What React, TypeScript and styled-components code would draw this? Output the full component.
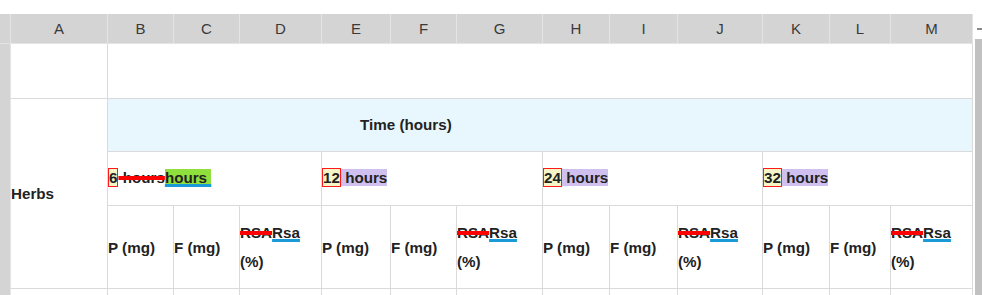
import React from 'react';
import styled, { createGlobalStyle } from 'styled-components';

const GlobalStyle = createGlobalStyle`
  html, body { margin: 0; padding: 0; background: #fff; overflow: hidden; }
  body { font-family: "Liberation Sans", Arial, sans-serif; }
  * { box-sizing: border-box; }
`;

const Viewport = styled.div`
  width: 982px;
  height: 295px;
  overflow: hidden;
  display: flex;
  background: #fff;
`;

const SheetArea = styled.div`
  width: 973px;
  padding-top: 14px;
`;

const Grid = styled.div`
  display: grid;
  grid-template-columns: 11px 97px 66px 66px 82px 69px 66px 86px 67px 68px 85px 67px 61px 82px;
  grid-template-rows: 30px 55px 53px 54px 83px 30px;
`;

const Corner = styled.div`
  background: #d4d4d4;
  border-right: 1px solid #e4e4e4;
  border-bottom: 1px solid #e4e4e4;
`;

const ColHeader = styled.div`
  background: #d4d4d4;
  border-right: 1px solid #e4e4e4;
  border-bottom: 1px solid #e4e4e4;
  display: flex;
  align-items: center;
  justify-content: center;
  font-size: 15px;
  color: #3a3a3a;
`;

const RowHeader = styled.div<{ $row: number }>`
  grid-column: 1;
  grid-row: ${(p) => p.$row};
  background: #d4d4d4;
  border-right: 1px solid #e4e4e4;
`;

const Cell = styled.div<{ $col: string; $row: string; $bg?: string; $pad?: number; $lift?: number }>`
  grid-column: ${(p) => p.$col};
  grid-row: ${(p) => p.$row};
  background: ${(p) => p.$bg || '#fff'};
  border-right: 1px solid #dadada;
  border-bottom: 1px solid #dadada;
  display: flex;
  align-items: center;
  padding-left: ${(p) => p.$pad || 0}px;
  padding-bottom: ${(p) => p.$lift || 0}px;
  font-size: 15.2px;
  font-weight: bold;
  color: #222;
  line-height: 29px;
  overflow: hidden;
`;

const CellText = styled.div`
  width: 100%;
`;

const NumBox = styled.span`
  background: #f5f5c8;
  border: 1px solid #ff1a1a;
`;

const Deleted = styled.span`
  text-decoration: line-through;
  text-decoration-color: #ff0000;
  text-decoration-thickness: 3.5px;
`;

const Inserted = styled.span<{ $bg?: string }>`
  background: ${(p) => p.$bg || 'transparent'};
  text-decoration: underline;
  text-decoration-color: #1a9bd7;
  text-decoration-thickness: 3px;
  text-underline-offset: 1px;
  white-space: pre;
`;

const Tagged = styled.span`
  background: #cfc0f0;
  white-space: pre;
`;

const Scrollbar = styled.div`
  width: 9px;
  display: flex;
  flex-direction: column;
  align-items: flex-end;
`;

const ScrollArrow = styled.div`
  margin-top: 28px;
  width: 5px;
  height: 2px;
  background: #8a8a8a;
`;

const ScrollThumb = styled.div`
  margin-top: 9px;
  width: 7px;
  flex: 1;
  background: #c1c1c1;
`;

const letters = ['A', 'B', 'C', 'D', 'E', 'F', 'G', 'H', 'I', 'J', 'K', 'L', 'M'];

const groups = [
  { col: '6 / 9', num: '12' },
  { col: '9 / 12', num: '24' },
  { col: '12 / 15', num: '32' },
];

const UnitCells: React.FC<{ start: number }> = ({ start }) => (
  <>
    <Cell $col={`${start}`} $row="5">P (mg)</Cell>
    <Cell $col={`${start + 1}`} $row="5">F (mg)</Cell>
    <Cell $col={`${start + 2}`} $row="5">
      <CellText>
        <Deleted>RSA</Deleted>
        <Inserted>Rsa</Inserted> (%)
      </CellText>
    </Cell>
  </>
);

export default function App() {
  return (
    <>
      <GlobalStyle />
      <Viewport>
        <SheetArea>
          <Grid>
            <Corner />
            {letters.map((l) => (
              <ColHeader key={l}>{l}</ColHeader>
            ))}
            {[2, 3, 4, 5, 6].map((r) => (
              <RowHeader key={r} $row={r} />
            ))}
            <Cell $col="2" $row="2" />
            <Cell $col="3 / 15" $row="2" />
            <Cell $col="2" $row="3 / 6">Herbs</Cell>
            <Cell $col="3 / 15" $row="3" $bg="#e8f6fd" $pad={252} $lift={2}>
              Time (hours)
            </Cell>
            <Cell $col="3 / 6" $row="4" $lift={2}>
              <CellText>
                <NumBox>6</NumBox>
                <Deleted> hours</Deleted>
                <Inserted $bg="#8fe03c">hours </Inserted>
              </CellText>
            </Cell>
            {groups.map((g) => (
              <Cell key={g.col} $col={g.col} $row="4" $lift={2}>
                <CellText>
                  <NumBox>{g.num}</NumBox>
                  <Tagged> hours</Tagged>
                </CellText>
              </Cell>
            ))}
            <UnitCells start={3} />
            <UnitCells start={6} />
            <UnitCells start={9} />
            <UnitCells start={12} />
            {[2, 3, 4, 5, 6, 7, 8, 9, 10, 11, 12, 13, 14].map((c) => (
              <Cell key={c} $col={`${c}`} $row="6" />
            ))}
          </Grid>
        </SheetArea>
        <Scrollbar>
          <ScrollArrow />
          <ScrollThumb />
        </Scrollbar>
      </Viewport>
    </>
  );
}
